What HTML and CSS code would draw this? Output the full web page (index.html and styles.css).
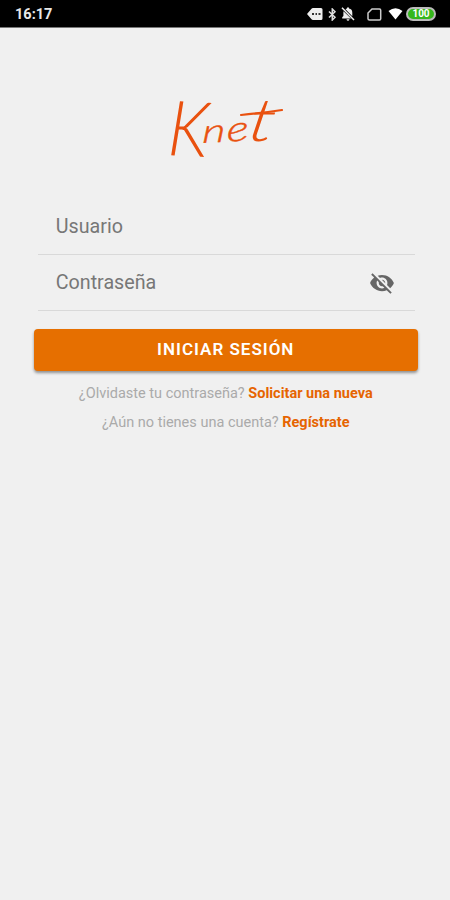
FILE: index.html
```html
<!DOCTYPE html>
<html lang="es">
<head>
<meta charset="UTF-8">
<meta name="viewport" content="width=device-width, initial-scale=1">
<title>Knet</title>
<link rel="stylesheet" href="styles.css">
</head>
<body>
<header class="status">
  <span class="time">16:17</span>
  <div class="status-icons">
    <svg class="tag" width="16" height="12" viewBox="0 0 16 12"><path d="M0 6 4.500.7Q5 0 6 0h8q1.500 0 1.500 1.500v9Q15.500 12 14 12H6Q5 12 4.500 11.300Z" fill="#eee"/><path d="M5 6h2m1.500 0h1.500m1.500 0h2" stroke="#333" stroke-width="2"/></svg>
    <svg class="bluetooth" width="9" height="13" viewBox="0 0 9 13"><path d="m1 3.500 6 5.800-2.700 2.700V1L7 3.700 1 9.500" fill="none" stroke="#ddd" stroke-width="1.500"/></svg>
    <svg class="bell" width="14" height="14" viewBox="0 0 14 14"><path d="M4.500 2.200Q5.200 1.700 6 1.600V.5h2v1.100q3.300.6 3.300 4.100v3.500ZM2.500 4.200 10 11.500H1.200V10.200l1.200-1.200V6q-.1-.9.100-1.800ZM5.500 12.200h3q-.3 1.500-1.500 1.500t-1.500-1.500Z" fill="#eee"/><path d="m1 .8 12 12.200" stroke="#eee" stroke-width="1.500"/></svg>
    <svg class="sim" width="15" height="13" viewBox="0 0 15 13"><path d="M5 1h7.500q1.200 0 1.200 1.200v8.600q0 1.200-1.200 1.200h-10Q1 12 1 10.800V5Z" fill="none" stroke="#ccc" stroke-width="1.500"/></svg>
    <svg class="wifi" width="15" height="12" viewBox="0 0 15 12"><path d="M.5 3Q7.500-2.500 14.500 3L7.500 11.500Z" fill="#fff"/></svg>
    <span class="battery">100</span>
  </div>
</header>
<main class="login">
  <svg class="logo" width="120" height="70" viewBox="0 0 120 70" role="img" aria-label="Knet">
    <g class="wordmark">
      <text class="cap" transform="translate(1 60) rotate(3) scale(.96 1.080)">K</text>
      <text class="small" transform="translate(36 48) rotate(-3) skewX(-6) scale(1.350 1)">n</text>
      <text class="small" transform="translate(61 47.500) rotate(-8) skewX(-6) scale(1.450 1.050)">e</text>
      <text class="tall" transform="translate(80 46) skewX(-10) scale(1.400 1.080)">t</text>
    </g>
    <path class="swash" d="M75 20Q95 18 116 15"/>
  </svg>
  <form class="form">
    <label class="field"><input type="text" placeholder="Usuario"></label>
    <label class="field"><input type="password" placeholder="Contraseña">
      <svg class="eye" width="26" height="26" viewBox="0 0 24 24"><path d="M12 7c2.760 0 5 2.240 5 5 0 .65-.13 1.260-.36 1.830l2.920 2.920c1.510-1.260 2.700-2.890 3.430-4.750-1.730-4.390-6-7.500-11-7.500-1.400 0-2.740.25-3.980.7l2.160 2.160C10.740 7.130 11.350 7 12 7zM2 4.270l2.280 2.280.46.46C3.080 8.300 1.780 10.020 1 12c1.730 4.390 6 7.500 11 7.500 1.550 0 3.030-.3 4.380-.84l.42.42L19.730 22 21 20.730 3.270 3 2 4.270zM7.530 9.800l1.550 1.550c-.05.210-.08.430-.08.650 0 1.660 1.340 3 3 3 .22 0 .44-.03.65-.08l1.550 1.550c-.67.33-1.410.53-2.200.53-2.760 0-5-2.240-5-5 0-.79.2-1.530.53-2.200zm4.310-.78 3.150 3.150.02-.16c0-1.660-1.340-3-3-3l-.17.010z"/></svg>
    </label>
    <button type="button" class="submit">INICIAR SESIÓN</button>
  </form>
  <p class="hint">¿Olvidaste tu contraseña? <a>Solicitar una nueva</a></p>
  <p class="hint second">¿Aún no tienes una cuenta? <a>Regístrate</a></p>
</main>
</body>
</html>
```
FILE: styles.css
```css
* { box-sizing: border-box; }
body {
  margin: 0;
  min-height: 900px;
  background: #f0f0f0;
  font-family: Roboto, "Liberation Sans", sans-serif;
}
.status {
  display: flex;
  align-items: center;
  justify-content: space-between;
  height: 28px;
  padding: 1px 14px 0 15px;
  background: #000;
  border-bottom: 1px solid #777;
}
.time { color: #e8e8e8; font-size: 14.500px; font-weight: 700; }
.status-icons { display: flex; align-items: center; }
.bluetooth { margin-left: 5px; }
.bell { margin-left: 4px; }
.sim { margin-left: 12px; }
.wifi { margin-left: 6px; }
.battery {
  width: 30px;
  height: 14px;
  margin-left: 3px;
  border: 2px solid #bbb;
  border-radius: 7px;
  background: #35b71c;
  color: #fff;
  font-size: 10px;
  font-weight: 700;
  line-height: 10px;
  text-align: center;
}
.login { display: flex; flex-direction: column; align-items: center; padding: 67px 0 0 1.500px; }
.logo { display: block; margin-left: 1px; overflow: visible; }
.wordmark {
  font-family: Lato, "Liberation Sans", sans-serif;
  font-style: italic;
  font-weight: 300;
  fill: #e9510f;
}
.cap { font-size: 71px; }
.small { font-size: 33px; stroke: #e9510f; stroke-width: .4; }
.tall { font-size: 55px; }
.swash { fill: none; stroke: #e9510f; stroke-width: 2.200; stroke-linecap: round; }
.form { width: 384px; margin-top: 34px; }
.field {
  display: flex;
  align-items: center;
  height: 56px;
  margin: 0 3px 0 4px;
  padding: 0 20px 0 18px;
  border-bottom: 1px solid #d9d9d9;
}
.field input {
  flex: 1;
  min-width: 0;
  padding: 0;
  border: 0;
  outline: 0;
  background: none;
  font: 400 19.700px Roboto, sans-serif;
}
.field input::placeholder { color: #777; opacity: 1; }
.eye { fill: #666; }
.submit {
  display: block;
  width: 384px;
  height: 42px;
  margin-top: 18px;
  padding: 0 0 2px;
  border: 0;
  border-radius: 4px;
  background: #e66f00;
  box-shadow: 0 2px 3px rgba(0, 0, 0, .4);
  color: #fff;
  font: 600 17px Roboto, sans-serif;
  letter-spacing: 1px;
}
.hint { margin: 14px 0 0; color: #aaa; font-size: 14.500px; line-height: 18px; white-space: nowrap; }
.hint.second { margin-top: 11px; }
.hint a { color: #e66400; font-weight: 700; }
```
